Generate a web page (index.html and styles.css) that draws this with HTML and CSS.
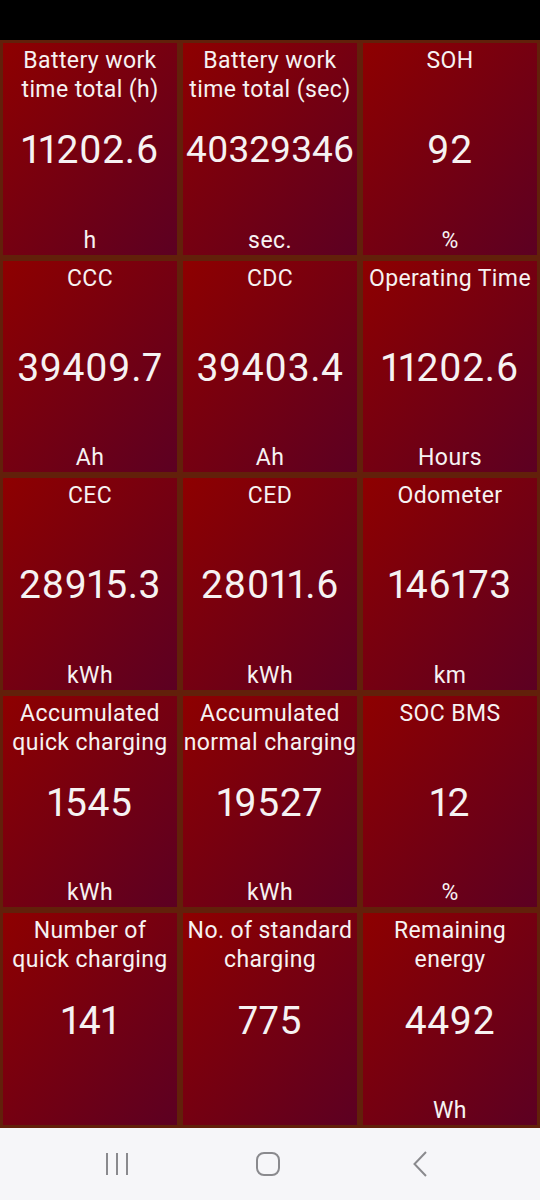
FILE: index.html
```html
<!DOCTYPE html>
<html lang="en">
<head>
    <meta charset="UTF-8">
    <meta name="viewport" content="width=device-width, initial-scale=1.0">
    <title>Battery info</title>
    <link rel="stylesheet" href="styles.css">
</head>
<body>
    <div class="statusbar"></div>

    <div class="grid">
        <div class="tile">
            <div class="titulo">Battery work<br>time total (h)</div>
            <div class="valor">11202.6</div>
            <div class="unidad">h</div>
        </div>
        <div class="tile">
            <div class="titulo">Battery work<br>time total (sec)</div>
            <div class="valor largo">40329346</div>
            <div class="unidad">sec.</div>
        </div>
        <div class="tile">
            <div class="titulo">SOH</div>
            <div class="valor">92</div>
            <div class="unidad">%</div>
        </div>

        <div class="tile">
            <div class="titulo">CCC</div>
            <div class="valor">39409.7</div>
            <div class="unidad">Ah</div>
        </div>
        <div class="tile">
            <div class="titulo">CDC</div>
            <div class="valor">39403.4</div>
            <div class="unidad">Ah</div>
        </div>
        <div class="tile">
            <div class="titulo">Operating Time</div>
            <div class="valor">11202.6</div>
            <div class="unidad">Hours</div>
        </div>

        <div class="tile">
            <div class="titulo">CEC</div>
            <div class="valor">28915.3</div>
            <div class="unidad">kWh</div>
        </div>
        <div class="tile">
            <div class="titulo">CED</div>
            <div class="valor">28011.6</div>
            <div class="unidad">kWh</div>
        </div>
        <div class="tile">
            <div class="titulo">Odometer</div>
            <div class="valor">146173</div>
            <div class="unidad">km</div>
        </div>

        <div class="tile">
            <div class="titulo">Accumulated<br>quick charging</div>
            <div class="valor">1545</div>
            <div class="unidad">kWh</div>
        </div>
        <div class="tile">
            <div class="titulo">Accumulated<br>normal charging</div>
            <div class="valor">19527</div>
            <div class="unidad">kWh</div>
        </div>
        <div class="tile">
            <div class="titulo">SOC BMS</div>
            <div class="valor">12</div>
            <div class="unidad">%</div>
        </div>

        <div class="tile">
            <div class="titulo">Number of<br>quick charging</div>
            <div class="valor">141</div>
            <div class="unidad"></div>
        </div>
        <div class="tile">
            <div class="titulo">No. of standard<br>charging</div>
            <div class="valor">775</div>
            <div class="unidad"></div>
        </div>
        <div class="tile">
            <div class="titulo">Remaining<br>energy</div>
            <div class="valor">4492</div>
            <div class="unidad">Wh</div>
        </div>
    </div>

    <div class="navbar">
        <svg class="nav-icon" width="22" height="24" viewBox="0 0 22 24">
            <path d="M1 1v22M11 1v22M21 1v22" stroke="#8a8a8e" stroke-width="2" fill="none"/>
        </svg>
        <svg class="nav-icon home" width="24" height="24" viewBox="0 0 24 24">
            <rect x="1" y="1" width="22" height="22" rx="7" stroke="#8a8a8e" stroke-width="2" fill="none"/>
        </svg>
        <svg class="nav-icon back" width="14" height="26" viewBox="0 0 14 26">
            <path d="M13 1L1.5 13 13 25" stroke="#8a8a8e" stroke-width="2" fill="none"/>
        </svg>
    </div>
</body>
</html>
```

FILE: styles.css
```css
body {
    margin: 0;
    font-family: Roboto, "Noto Sans", sans-serif;
    background-color: #000;
}
.statusbar {
    height: 40px;
    background-color: #000;
}
.grid {
    box-sizing: border-box;
    height: 1088px;
    padding: 3px;
    display: grid;
    grid-template-columns: repeat(3, 1fr);
    grid-template-rows: repeat(5, 1fr);
    gap: 6px;
    background-color: #62200a;
}
.tile {
    display: grid;
    grid-template-rows: 1fr auto 1fr;
    text-align: center;
    color: #f6f2f2;
    background: linear-gradient(to bottom right, #8e0000, #5c0022);
    overflow: hidden;
}
.titulo {
    align-self: start;
    padding-top: 3px;
    font-size: 23px;
    line-height: 29px;
    letter-spacing: 0.4px;
    white-space: nowrap;
}
.valor {
    padding-top: 3px;
    font-size: 39px;
    line-height: 46px;
    letter-spacing: 0.6px;
    font-variant-numeric: proportional-nums;
    white-space: nowrap;
}
.valor.largo {
    font-size: 37px;
    letter-spacing: 0;
}
.unidad {
    align-self: end;
    font-size: 23px;
    line-height: 28px;
    letter-spacing: 0.4px;
}
.navbar {
    height: 72px;
    background-color: #f6f6f9;
    display: flex;
    align-items: center;
    padding-left: 106px;
}
.nav-icon {
    display: block;
}
.home {
    margin-left: 128px;
}
.back {
    margin-left: 133px;
}
```
